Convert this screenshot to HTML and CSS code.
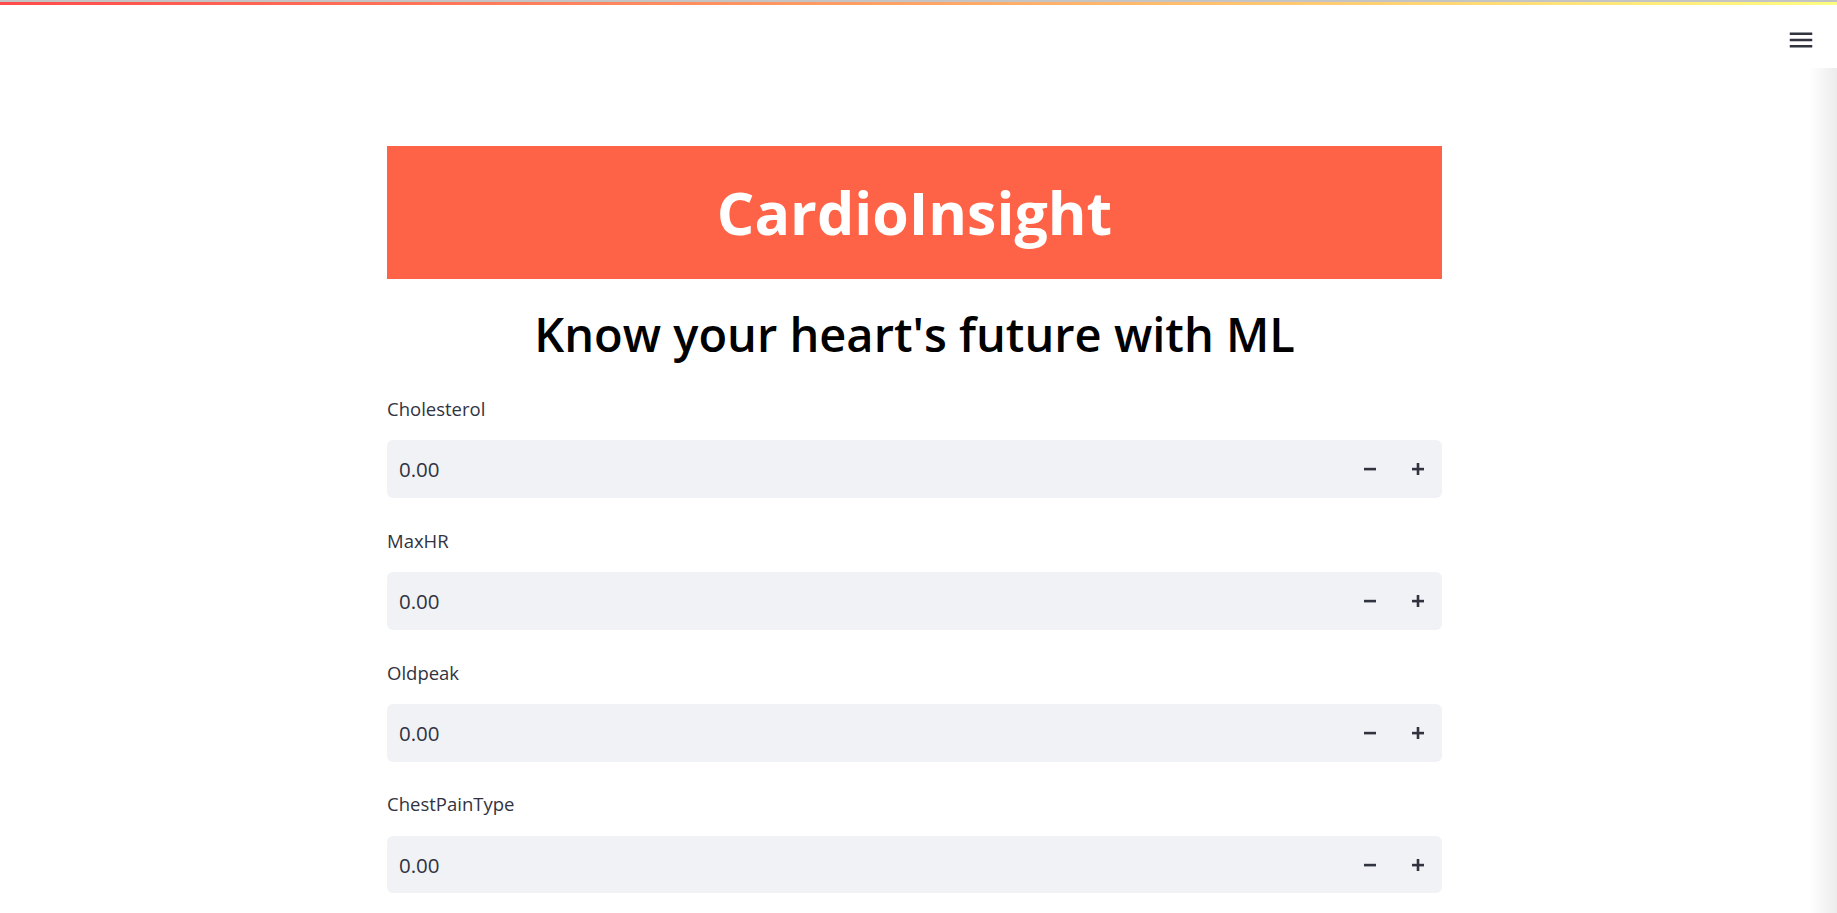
FILE: index.html
```html
<!DOCTYPE html>
<html lang="en">
<head>
<meta charset="utf-8">
<title>CardioInsight</title>
<link rel="stylesheet" href="styles.css">
</head>
<body>
<div class="decoration"></div>
<header class="app-header">
  <button class="menu-btn" aria-label="Main menu">
    <svg width="30" height="30" viewBox="0 0 24 24"><path fill="#31333f" d="M3 18h18v-2H3v2zm0-5h18v-2H3v2zm0-7v2h18V6H3z"/></svg>
  </button>
</header>
<div class="edge-shadow"></div>
<main class="main">
  <div class="block">
    <div class="banner"><h1 class="banner-title">CardioInsight</h1></div>
    <h2 class="subtitle">Know your heart's future with ML</h2>

    <div class="field">
      <label class="field-label">Cholesterol</label>
      <div class="number-input">
        <span class="value">0.00</span>
        <div class="steps">
          <span class="step"><svg width="12" height="12" viewBox="0 0 12 12"><rect x="0" y="4.8" width="12" height="2.6" fill="#31333f"/></svg></span>
          <span class="step"><svg width="12" height="12" viewBox="0 0 12 12"><rect x="0" y="4.8" width="12" height="2.6" fill="#31333f"/><rect x="4.7" y="0" width="2.6" height="12" fill="#31333f"/></svg></span>
        </div>
      </div>
    </div>

    <div class="field">
      <label class="field-label">MaxHR</label>
      <div class="number-input">
        <span class="value">0.00</span>
        <div class="steps">
          <span class="step"><svg width="12" height="12" viewBox="0 0 12 12"><rect x="0" y="4.8" width="12" height="2.6" fill="#31333f"/></svg></span>
          <span class="step"><svg width="12" height="12" viewBox="0 0 12 12"><rect x="0" y="4.8" width="12" height="2.6" fill="#31333f"/><rect x="4.7" y="0" width="2.6" height="12" fill="#31333f"/></svg></span>
        </div>
      </div>
    </div>

    <div class="field">
      <label class="field-label">Oldpeak</label>
      <div class="number-input">
        <span class="value">0.00</span>
        <div class="steps">
          <span class="step"><svg width="12" height="12" viewBox="0 0 12 12"><rect x="0" y="4.8" width="12" height="2.6" fill="#31333f"/></svg></span>
          <span class="step"><svg width="12" height="12" viewBox="0 0 12 12"><rect x="0" y="4.8" width="12" height="2.6" fill="#31333f"/><rect x="4.7" y="0" width="2.6" height="12" fill="#31333f"/></svg></span>
        </div>
      </div>
    </div>

    <div class="field">
      <label class="field-label">ChestPainType</label>
      <div class="number-input">
        <span class="value">0.00</span>
        <div class="steps">
          <span class="step"><svg width="12" height="12" viewBox="0 0 12 12"><rect x="0" y="4.8" width="12" height="2.6" fill="#31333f"/></svg></span>
          <span class="step"><svg width="12" height="12" viewBox="0 0 12 12"><rect x="0" y="4.8" width="12" height="2.6" fill="#31333f"/><rect x="4.7" y="0" width="2.6" height="12" fill="#31333f"/></svg></span>
        </div>
      </div>
    </div>
  </div>
</main>
</body>
</html>
```
FILE: styles.css
```css
html, body {
  margin: 0;
  padding: 0;
  background: #ffffff;
  overflow: hidden;
}
body {
  font-family: "Open Sans", "Noto Sans", sans-serif;
  color: #31333f;
}
.decoration {
  height: 3px;
  border-top: 2px solid #c4c4c4;
  background: linear-gradient(90deg, #ff4b4b, #fffd80);
}
.app-header {
  height: 62px;
  display: flex;
  justify-content: flex-end;
  align-items: flex-start;
  padding-right: 21px;
  box-sizing: border-box;
  padding-top: 20px;
}
.menu-btn {
  border: 0;
  background: none;
  padding: 0;
  margin: 0;
  width: 30px;
  height: 30px;
  display: block;
}
.menu-btn svg { display: block; }
.edge-shadow {
  position: fixed;
  right: 0;
  top: 68px;
  bottom: 0;
  width: 28px;
  background: linear-gradient(to right, rgba(0,0,0,0), rgba(0,0,0,0.075));
  pointer-events: none;
}
.main {
  padding: 79px 8px 0 0;
}
.block {
  width: 1055px;
  margin: 0 auto;
  display: flex;
  flex-direction: column;
}
.banner {
  height: 133px;
  background: #ff6347;
  display: flex;
  align-items: center;
  justify-content: center;
}
.banner-title {
  margin: 0;
  color: #ffffff;
  font-size: 59px;
  font-weight: 700;
  line-height: 1.2;
}
.subtitle {
  margin: 27px 0 0 0;
  text-align: center;
  color: #000000;
  font-size: 47px;
  font-weight: 600;
  line-height: 56px;
}
.field {
  display: flex;
  flex-direction: column;
}
.subtitle + .field { margin-top: 33px; }
.field + .field { margin-top: 28.8px; }
.field-label {
  font-size: 18.5px;
  line-height: 28.8px;
  margin-bottom: 16.7px;
  color: #31333f;
}
.number-input {
  height: 57.5px;
  background: #f0f2f6;
  border-radius: 6px;
  display: flex;
  align-items: center;
  padding-left: 12px;
}
.value {
  flex: 1;
  font-size: 20.5px;
  color: #31333f;
}
.steps {
  display: flex;
  height: 100%;
}
.step {
  width: 48px;
  height: 100%;
  display: flex;
  align-items: center;
  justify-content: center;
}
.step svg { display: block; }
```
